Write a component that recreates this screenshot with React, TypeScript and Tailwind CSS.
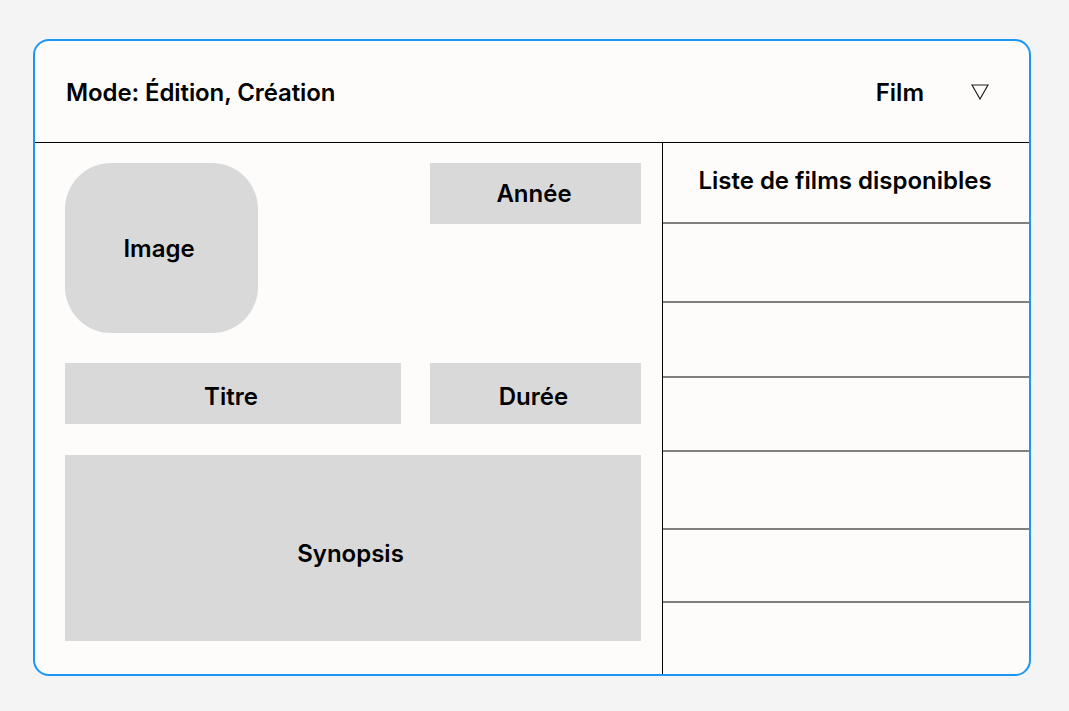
import React from "react";

const rowHeights = [79, 75, 74, 78, 73];

export default function App() {
  return (
    <div className="w-[1069px] h-[711px] bg-[#f4f4f5] pt-[39px] pl-[33px]" style={{ fontFamily: "Inter, 'Noto Sans', sans-serif" }}>
      <div className="w-[998px] h-[637px] border-2 border-[#1a97f5] rounded-[16px] bg-[#fdfcfb] flex flex-col overflow-hidden text-black">
        <div className="h-[102px] shrink-0 border-b border-black flex items-center pl-[31px] pr-[40px] pt-[3px]">
          <span className="text-[24px] font-semibold tracking-[-0.1px]">Mode: Édition, Création</span>
          <div className="ml-auto flex items-center gap-[47px]">
            <span className="text-[24px] font-semibold">Film</span>
            <svg width="18" height="16" viewBox="0 0 18 16" className="mt-[-2px]">
              <path d="M1 1 H17 L9 15 Z" fill="none" stroke="#222" strokeWidth="1.2" strokeLinejoin="miter" />
            </svg>
          </div>
        </div>
        <div className="flex flex-1 min-h-0">
          <div className="w-[627px] shrink-0 pt-[20px] pl-[30px] pr-[21px]">
            <div className="grid grid-cols-[336px_211px] gap-x-[29px]">
              <div className="w-[193px] h-[170px] rounded-[46px] bg-[#d9d9d9] flex items-center justify-center text-[24px] font-semibold pr-[5px] pt-[2px]">Image</div>
              <div className="h-[61px] bg-[#d9d9d9] flex items-center justify-center text-[24px] font-semibold pr-[3px]">Année</div>
              <div className="mt-[30px] h-[61px] bg-[#d9d9d9] flex items-center justify-center text-[24px] font-semibold pt-[6px] pr-[4px]">Titre</div>
              <div className="mt-[30px] h-[61px] bg-[#d9d9d9] flex items-center justify-center text-[24px] font-semibold pt-[6px] pr-[4px]">Durée</div>
              <div className="col-span-2 mt-[31px] h-[186px] bg-[#d9d9d9] flex items-center justify-center text-[24px] font-semibold pt-[12px] pr-[5px]">Synopsis</div>
            </div>
          </div>
          <div className="flex-1 border-l border-black flex flex-col">
            <div className="h-[81px] shrink-0 border-b-2 border-[#808080] flex items-center justify-center text-[24px] font-semibold pb-[4px] pr-[2px]">Liste de films disponibles</div>
            {rowHeights.map((h, i) => (
              <div key={i} className="shrink-0 border-b-2 border-[#808080]" style={{ height: h }} />
            ))}
            <div className="flex-1" />
          </div>
        </div>
      </div>
    </div>
  );
}
